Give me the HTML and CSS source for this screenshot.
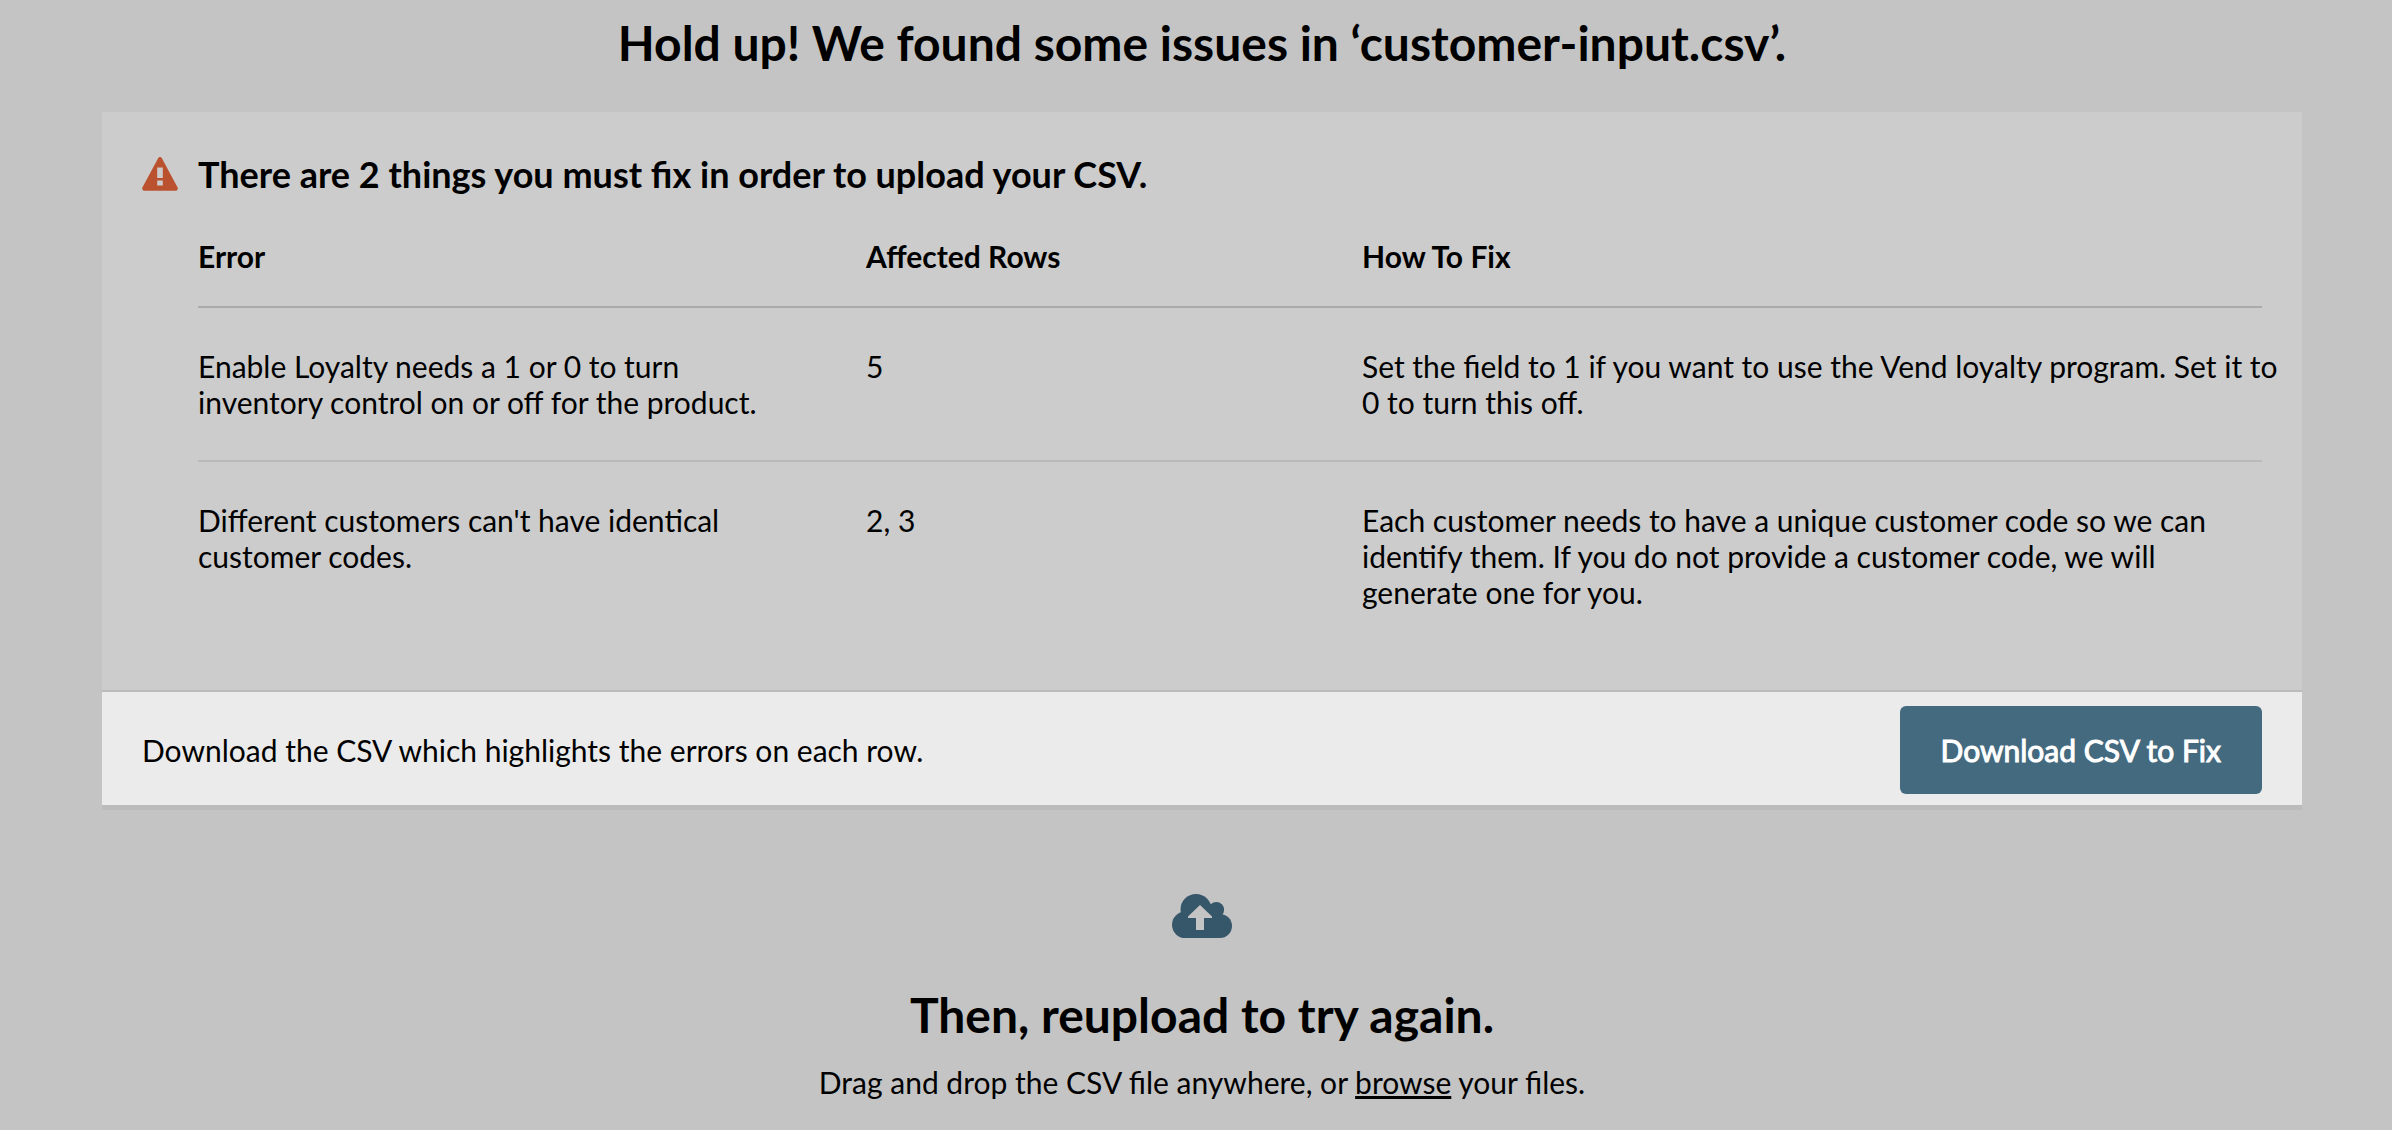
FILE: index.html
```html
<!DOCTYPE html>
<html lang="en">
<head>
  <meta charset="utf-8">
  <meta name="viewport" content="width=device-width, initial-scale=1">
  <title>Import customers</title>
  <link rel="stylesheet" href="styles.css">
</head>
<body>
  <main class="page">
    <h1 class="title">Hold up! We found some issues in ‘customer-input.csv’.</h1>

    <section class="card">
      <div class="card-body">
        <svg class="warning-icon" viewBox="0 0 36 34" aria-hidden="true">
          <path fill="#bb522f" fill-rule="evenodd" d="M16.1 1.2a2.2 2.2 0 0 1 3.8 0L35.6 30.6a2.2 2.2 0 0 1-1.9 3.2H2.3a2.2 2.2 0 0 1-1.9-3.2ZM15.2 10.6V21h5.6V10.6ZM15.2 23.4v5.2h5.6v-5.2Z"/>
        </svg>
        <div class="issues">
          <h2 class="subtitle">There are 2 things you must fix in order to upload your CSV.</h2>
          <table class="table">
            <thead>
              <tr>
                <th class="col-error" scope="col">Error</th>
                <th class="col-rows" scope="col">Affected Rows</th>
                <th scope="col">How To Fix</th>
              </tr>
            </thead>
            <tbody>
              <tr>
                <td>Enable Loyalty needs a 1 or 0 to turn inventory control on or off for the product.</td>
                <td>5</td>
                <td><p class="fix">Set the field to 1 if you want to use the Vend loyalty program. Set it to 0 to turn this off.</p></td>
              </tr>
              <tr>
                <td>Different customers can't have identical customer codes.</td>
                <td>2, 3</td>
                <td><p class="fix">Each customer needs to have a unique customer code so we can identify them. If you do not provide a customer code, we will generate&nbsp;one for you.</p></td>
              </tr>
            </tbody>
          </table>
        </div>
      </div>
      <div class="card-footer">
        <p class="text">Download the CSV which highlights the errors on each row.</p>
        <button class="button" type="button">Download CSV to Fix</button>
      </div>
    </section>

    <section class="reupload">
      <svg class="cloud-icon" viewBox="0 0 60 44" aria-hidden="true">
        <g fill="#365669">
          <circle cx="13.200" cy="30.800" r="13.200"/>
          <circle cx="24" cy="15.500" r="15.500"/>
          <circle cx="44.300" cy="15.800" r="7.800"/>
          <circle cx="48" cy="32" r="12"/>
          <path d="M13 20H46V44H13Z"/>
        </g>
        <path fill="#c4c4c4" d="M28 11 16 22.500V24H24V36h8V24h8V22.500Z"/>
      </svg>
      <h1 class="title">Then, reupload to try again.</h1>
      <p class="text">Drag and drop the CSV file anywhere, or <a class="link" href="#">browse</a> your files.</p>
    </section>
  </main>
</body>
</html>
```
FILE: styles.css
```css
* {
  box-sizing: border-box;
}

body {
  margin: 0;
  background: #c4c4c4;
  color: #000;
  font-family: Lato, sans-serif;
  font-size: 30px;
  line-height: 36px;
}

.page {
  padding: 14px 90px 28px 102px;
}

.title {
  margin: 0;
  font-size: 48px;
  line-height: 58px;
  font-weight: 700;
  text-align: center;
}

.card {
  margin-top: 40px;
  background: #ccc;
  box-shadow: 0 5px 0 #bbb;
}

.card-body {
  display: flex;
  align-items: flex-start;
  gap: 20px;
  padding: 40px;
}

.warning-icon {
  flex: none;
  width: 36px;
  height: 34px;
  margin-top: 5px;
}

.issues {
  flex: 1;
}

.subtitle {
  margin: 0 0 42px;
  font-size: 36px;
  line-height: 44px;
  font-weight: 700;
}

.table {
  width: 100%;
  border-collapse: separate;
  border-spacing: 0;
  table-layout: fixed;
}

.table th,
.table td {
  text-align: left;
  vertical-align: top;
}

.table th {
  padding: 0 0 32px;
  border-bottom: 2px solid #aaa;
  font-weight: 700;
}

.table td {
  padding: 40px 0;
}

.table td:first-child {
  padding-right: 80px;
}

.table tbody tr:not(:last-child) td {
  border-bottom: 2px solid #bababa;
}

.col-error {
  width: 668px;
}

.col-rows {
  width: 496px;
}

/* Long instructions may run a little way into the card's padding. */
.fix {
  margin: 0 -20px 0 0;
}

.card-footer {
  display: flex;
  align-items: center;
  justify-content: space-between;
  padding: 14px 40px 11px;
  border-top: 2px solid #bbb;
  background: #ebebeb;
}

.text {
  margin: 0;
}

.button {
  padding: 26px 41px;
  border: 0;
  border-radius: 6px;
  background: #446a80;
  color: #fff;
  font: inherit;
  -webkit-text-stroke: 1px #fff;
}

.reupload {
  display: flex;
  flex-direction: column;
  align-items: center;
  padding-top: 89px;
}

.cloud-icon {
  width: 60px;
  height: 44px;
  margin-bottom: 48px;
}

.reupload .text {
  margin-top: 20px;
}

.link {
  color: inherit;
}
```
